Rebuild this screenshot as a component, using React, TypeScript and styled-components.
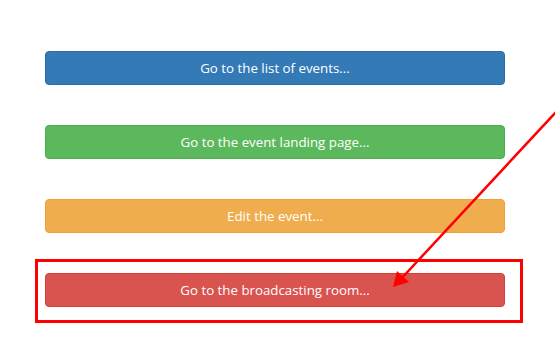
import React from 'react'
import styled, { createGlobalStyle } from 'styled-components'

const GlobalStyle = createGlobalStyle`
  html, body {
    margin: 0;
    padding: 0;
    background: #fff;
  }
  body {
    width: 555px;
    height: 337px;
    overflow: hidden;
    font-family: 'Open Sans', 'DejaVu Sans', sans-serif;
  }
`

const variants = {
  primary: { bg: '#337ab7', border: '#2e6da4' },
  success: { bg: '#5cb85c', border: '#4cae4c' },
  warning: { bg: '#f0ad4e', border: '#eea236' },
  danger: { bg: '#d9534f', border: '#d43f3a' },
}

type Variant = keyof typeof variants

const Page = styled.div`
  position: relative;
  width: 555px;
  height: 337px;
`

const List = styled.div`
  display: flex;
  flex-direction: column;
  gap: 40px;
  padding: 51px 0 0 45px;
`

const Button = styled.button<{ $variant: Variant }>`
  box-sizing: border-box;
  width: 460px;
  height: 34px;
  border: 1px solid ${(p) => variants[p.$variant].border};
  border-radius: 4px;
  background: ${(p) => variants[p.$variant].bg};
  color: #fff;
  font-family: 'Open Sans', 'DejaVu Sans', sans-serif;
  font-size: 13.3px;
  line-height: 20px;
  padding: 6px 12px;
  text-align: center;
  cursor: pointer;
`

const Highlight = styled.div`
  position: absolute;
  left: 35px;
  top: 259px;
  width: 488px;
  height: 64px;
  box-sizing: border-box;
  border: 3px solid #ff0000;
  pointer-events: none;
`

const Arrow = styled.svg`
  position: absolute;
  left: 0;
  top: 0;
  pointer-events: none;
`

const buttons: { label: string; variant: Variant }[] = [
  { label: 'Go to the list of events...', variant: 'primary' },
  { label: 'Go to the event landing page...', variant: 'success' },
  { label: 'Edit the event...', variant: 'warning' },
  { label: 'Go to the broadcasting room...', variant: 'danger' },
]

export default function App() {
  return (
    <>
      <GlobalStyle />
      <Page>
        <List>
          {buttons.map((b) => (
            <Button key={b.label} $variant={b.variant}>
              {b.label}
            </Button>
          ))}
        </List>
        <Highlight />
        <Arrow width="555" height="337" viewBox="0 0 555 337">
          <line x1="556" y1="112" x2="400" y2="280" stroke="#ff0000" strokeWidth="2.5" />
          <polygon points="393,287 397,271 409,282" fill="#ff0000" />
        </Arrow>
      </Page>
    </>
  )
}
